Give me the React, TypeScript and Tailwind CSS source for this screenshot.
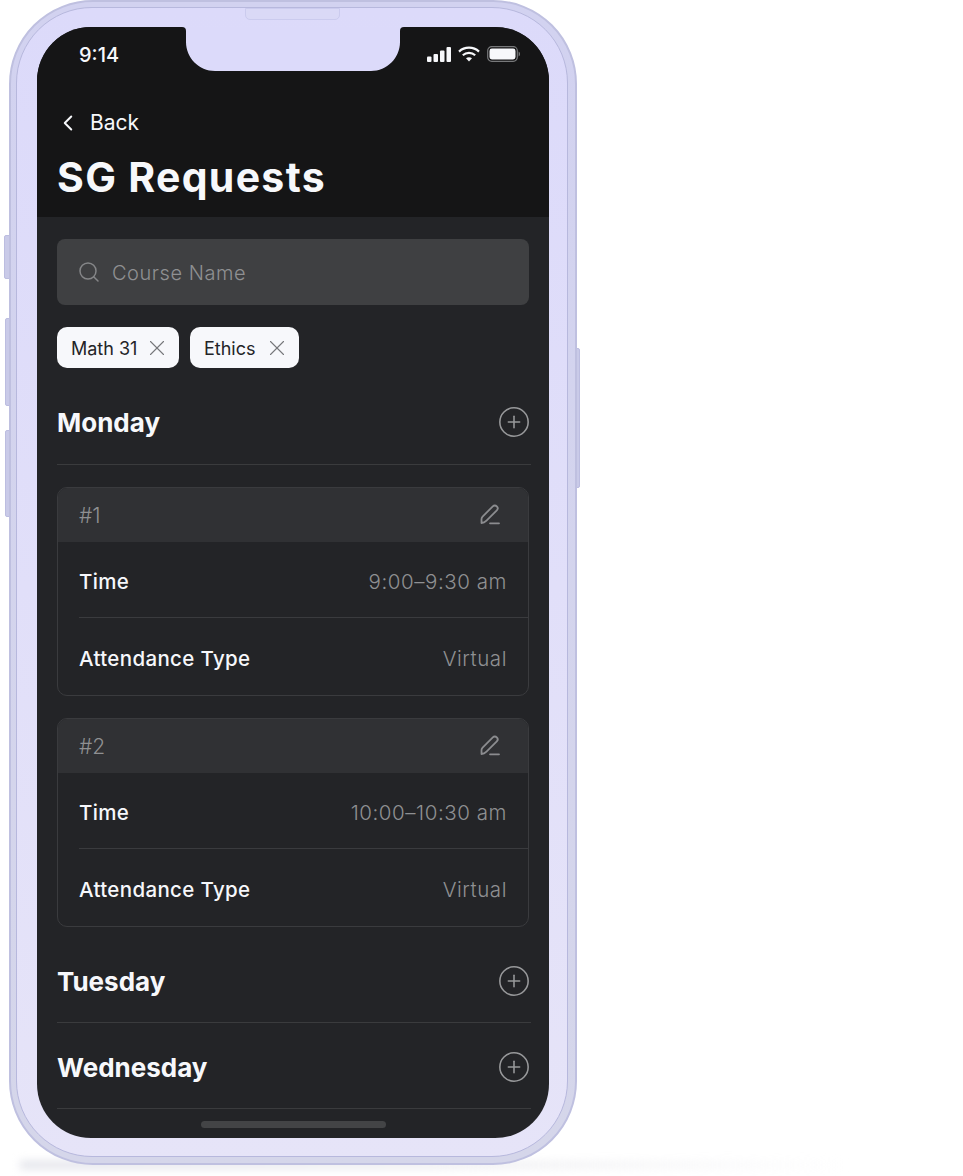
import { Search, X, CirclePlus, ChevronLeft } from "lucide-react";

const font = "font-['Inter','Noto_Sans',sans-serif]";

function Pen() {
  return (
    <svg width="22" height="22" viewBox="0 0 22 22" fill="none" stroke="#8b8c8f" strokeWidth="1.800" strokeLinecap="round" strokeLinejoin="round" className="mt-[-2px]">
      <path d="M2.500 20v-3.800c0-1 .4-1.900 1.100-2.600L13.800 3.300c1.100-1.100 2.900-1.100 4 0s1.100 2.900 0 4L7.500 17.600c-1.500 1.500-3 2.400-5 2.400Z" />
      <path d="M11 20.300h9" />
    </svg>
  );
}

function DayRow({ name, top }: { name: string; top: string }) {
  return (
    <div className={`flex h-[86px] items-center justify-between border-b border-[#3a3b3d] ${top} pr-[3px] w-[474px]`}>
      <div className="text-[26px] font-bold text-[#f7f8fb]">{name}</div>
      <CirclePlus size={34} strokeWidth={1.100} color="#98999b" className="mr-[-2.500px]" />
    </div>
  );
}

function Card({ n, time }: { n: string; time: string }) {
  return (
    <div className="w-[472px] h-[209px] rounded-[10px] border border-[#3a3b3e] overflow-hidden flex flex-col">
      <div className="h-[54px] bg-[#303134] flex items-center justify-between pl-[21px] pr-[27px]">
        <span className="text-[21px] pt-px font-light text-[#8f9092]">{n}</span>
        <Pen />
      </div>
      <div className="ml-[21px] h-[76px] border-b border-[#3a3b3e] flex items-center justify-between pr-[21px] pt-[6px]">
        <span className="text-[20.500px] font-medium tracking-[0.3px] text-[#f6f7fb]">Time</span>
        <span className="text-[20.500px] font-light tracking-[0.55px] text-[#8f9092]">{time}</span>
      </div>
      <div className="ml-[21px] flex-1 flex items-center justify-between pr-[21px] pt-[5px]">
        <span className="text-[20.500px] font-medium tracking-[0.35px] text-[#f6f7fb]">Attendance Type</span>
        <span className="text-[20.500px] font-light tracking-[0.55px] text-[#8f9092]">Virtual</span>
      </div>
    </div>
  );
}

function Chip({ label, w }: { label: string; w: string }) {
  return (
    <div className={`${w} h-[41px] rounded-[10px] bg-[#f7f8fb] flex items-center justify-between pl-[14px] pr-[14px] pt-px`}>
      <span className="text-[18px] text-[#232427]">{label}</span>
      <X size={26} strokeWidth={1} color="#76777a" className="mr-[-5px]" />
    </div>
  );
}

export default function App() {
  return (
    <div className={`${font} relative w-[963px] h-[1176px] bg-white overflow-hidden`}>
      {/* floor shadow */}
      <div className="absolute left-[20px] top-[1161px] w-[830px] h-[8px] blur-[4px] bg-gradient-to-r from-[#e2e3ea] via-[#eeeef1] to-transparent" />

      {/* side buttons */}
      <div className="absolute left-[4px] top-[235px] w-[6px] h-[44px] rounded-l-[2px] bg-[#c9cae8] border border-[#bcbde0]" />
      <div className="absolute left-[5px] top-[318px] w-[5px] h-[88px] rounded-l-[2px] bg-[#c9cae8] border border-[#bcbde0]" />
      <div className="absolute left-[5px] top-[430px] w-[5px] h-[87px] rounded-l-[2px] bg-[#c9cae8] border border-[#bcbde0]" />
      <div className="absolute left-[576px] top-[348px] w-[4px] h-[140px] rounded-r-[2px] bg-[#c9cae8] border border-[#bcbde0]" />

      {/* phone frame */}
      <div className="absolute left-[9px] top-0 w-[568px] h-[1165px] rounded-[84px] border-2 border-[#bfc0e0] bg-gradient-to-b from-[#d2d2f0] to-[#d5d6ea] pt-[5px] pl-[5px] pr-[7px] pb-[6px]">
        <div className="w-full h-full rounded-[76px] border border-[#b7b8dd] bg-gradient-to-b from-[#dcdafa] to-[#e6e4f8] pt-[19px] pl-[20px] pr-[18px] pb-[18px]">
          {/* screen */}
          <div className="relative w-[512px] h-[1111px] rounded-[54px] overflow-hidden bg-[#232427]">
            {/* header */}
            <div className="h-[190px] bg-[#151516] flex flex-col">
              <div className="h-[57px] flex justify-between pl-[42px] pr-[29px] pt-[15px]">
                <span className="text-[20px] leading-[26px] font-medium text-[#f7f8fb]">9:14</span>
                <div className="flex items-start gap-[6px] pt-[4px]">
                  <svg width="24" height="15" viewBox="0 0 24 15" fill="#f7f8fb" className="mt-[1px]">
                    <rect x="0" y="9.500" width="4.500" height="5.500" rx="1" />
                    <rect x="6.500" y="7" width="4.500" height="8" rx="1" />
                    <rect x="13" y="3.500" width="4.500" height="11.500" rx="1" />
                    <rect x="19.500" y="0" width="4.500" height="15" rx="1" />
                  </svg>
                  <svg width="22" height="16" viewBox="0 0 22 16" fill="none" stroke="#f7f8fb" strokeWidth="2.200" className="mx-[1px]">
                    <path d="M1 5.600C6.600.4 15.400.4 21 5.600" />
                    <path d="M4.800 9.200c3.500-3.100 8.900-3.100 12.400 0" />
                    <path d="M11 15.400 8 12.200c1.700-1.400 4.300-1.400 6 0l-3 3.200Z" fill="#f7f8fb" stroke="none" />
                  </svg>
                  <svg width="33" height="16" viewBox="0 0 33 16" fill="none">
                    <rect x="0.700" y="0.700" width="29.600" height="14.600" rx="4" stroke="#77787a" strokeWidth="1.200" />
                    <rect x="2.500" y="2.500" width="26" height="11" rx="2.400" fill="#f7f8fb" />
                    <path d="M31.600 5.500c1 .4 1.400 1.400 1.400 2.500s-.4 2.100-1.400 2.500v-5Z" fill="#77787a" />
                  </svg>
                </div>
              </div>
              <div className="flex items-center h-[42px] mt-[18px] pl-[18px]">
                <ChevronLeft size={26} strokeWidth={1.800} color="#f7f8fb" />
                <span className="ml-[9px] text-[21px] text-[#f7f8fb]">Back</span>
              </div>
              <div className="pl-[20px] mt-[5px] text-[41px] leading-[56px] font-bold tracking-[1.3px] text-[#f7f8fb]">SG Requests</div>
            </div>

            {/* body */}
            <div className="px-[20px] pt-[22px]">
              <div className="h-[66px] w-[472px] rounded-[8px] bg-[#3f4042] flex items-center pl-[20px]">
                <Search size={24} strokeWidth={1.500} color="#858688" />
                <span className="ml-[11px] pt-[2px] text-[20px] font-light tracking-[0.55px] text-[#8f9092]">Course Name</span>
              </div>
              <div className="flex gap-[11px] mt-[22px]">
                <Chip label="Math 31" w="w-[122px]" />
                <Chip label="Ethics" w="w-[109px]" />
              </div>
              <div className="mt-[11px]">
                <DayRow name="Monday" top="pt-[1px]" />
              </div>
              <div className="mt-[22px] flex flex-col gap-[22px]">
                <Card n="#1" time="9:00–9:30 am" />
                <Card n="#2" time="10:00–10:30 am" />
              </div>
              <div className="mt-[10px]">
                <DayRow name="Tuesday" top="pt-[3px]" />
                <DayRow name="Wednesday" top="pt-[3px]" />
              </div>
            </div>

            {/* home indicator */}
            <div className="absolute left-[164px] bottom-[10px] w-[185px] h-[7px] rounded-full bg-[#434446]" />

            {/* notch */}
            <svg className="absolute left-[145px] top-0" width="222" height="44" viewBox="0 0 222 44" fill="#dcdafa">
              <path d="M0 0c2.800 0 4 1.600 4 4v11c0 16 13 29 29 29h156c16 0 29-13 29-29V4c0-2.400 1.200-4 4-4H0Z" />
            </svg>
          </div>
        </div>
      </div>

      {/* speaker */}
      <div className="absolute left-[245px] top-[8px] w-[95px] h-[12px] rounded-b-[5px] border border-[#cbcbee] bg-[#dad9f6]" />
    </div>
  );
}
